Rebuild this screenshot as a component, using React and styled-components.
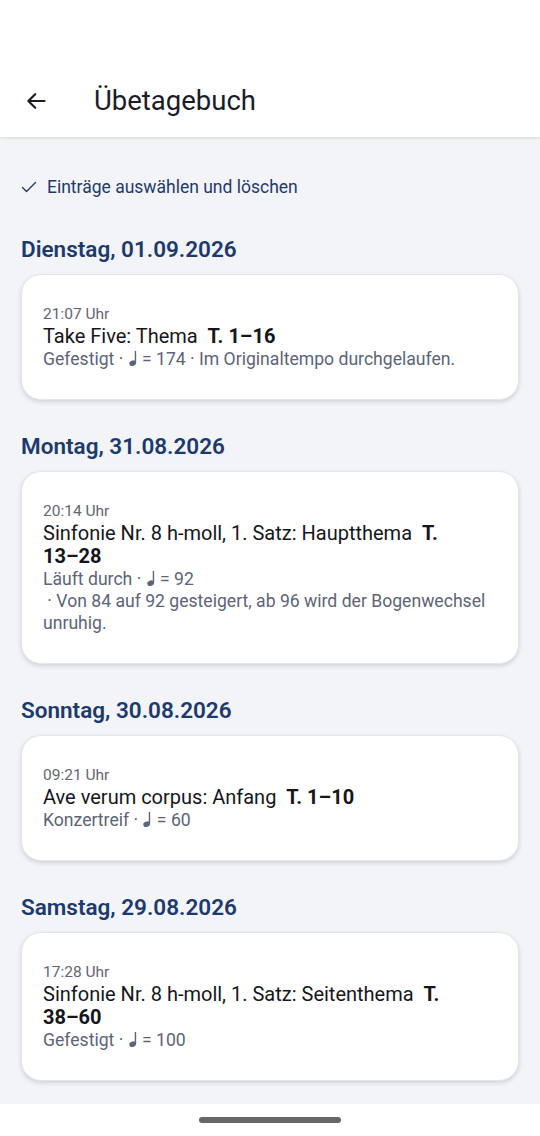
import React from "react";
import styled, { createGlobalStyle } from "styled-components";

const GlobalStyle = createGlobalStyle`
  html, body {
    margin: 0;
    padding: 0;
    background: #f3f4f8;
    font-family: Roboto, "Noto Sans", "Liberation Sans", sans-serif;
  }
  * { box-sizing: border-box; }
`;

const entries = [
  {
    day: "Dienstag, 01.09.2026",
    time: "21:07 Uhr",
    piece: "Take Five: Thema",
    bars: "1–16",
    status: "Gefestigt",
    tempo: 174,
    note: "Im Originaltempo durchgelaufen.",
    inline: true,
  },
  {
    day: "Montag, 31.08.2026",
    time: "20:14 Uhr",
    piece: "Sinfonie Nr. 8 h-moll, 1. Satz: Hauptthema",
    bars: "13–28",
    status: "Läuft durch",
    tempo: 92,
    note: "Von 84 auf 92 gesteigert, ab 96 wird der Bogenwechsel unruhig.",
  },
  {
    day: "Sonntag, 30.08.2026",
    time: "09:21 Uhr",
    piece: "Ave verum corpus: Anfang",
    bars: "1–10",
    status: "Konzertreif",
    tempo: 60,
  },
  {
    day: "Samstag, 29.08.2026",
    time: "17:28 Uhr",
    piece: "Sinfonie Nr. 8 h-moll, 1. Satz: Seitenthema",
    bars: "38–60",
    status: "Gefestigt",
    tempo: 100,
  },
];

function QuarterNote() {
  return (
    <NoteIcon viewBox="0 0 10 18" aria-label="♩">
      <path d="M7.6 1v12.6" stroke="currentColor" strokeWidth="1.5" />
      <ellipse cx="4.6" cy="14" rx="3.6" ry="2.8" transform="rotate(-22 4.6 14)" fill="currentColor" />
    </NoteIcon>
  );
}

export default function App() {
  return (
    <>
      <GlobalStyle />
      <Screen>
        <Header>
          <BackButton aria-label="Zurück">
            <svg width="24" height="24" viewBox="0 0 24 24" fill="none">
              <path
                d="M20.5 12H4.5M11.2 5.2L4.4 12l6.8 6.8"
                stroke="#1a1c28"
                strokeWidth="2.2"
                strokeLinecap="round"
                strokeLinejoin="round"
              />
            </svg>
          </BackButton>
          <Title>Übetagebuch</Title>
        </Header>
        <Content>
          <SelectRow>
            <svg width="16" height="16" viewBox="0 0 16 16" fill="none">
              <path
                d="M1.5 8.5l4 4L14.5 3.5"
                stroke="#1d3a6e"
                strokeWidth="1.4"
                strokeLinecap="round"
                strokeLinejoin="round"
              />
            </svg>
            Einträge auswählen und löschen
          </SelectRow>
          {entries.map((e) => (
            <Section key={e.day}>
              <DayHeading>{e.day}</DayHeading>
              <Card>
                <Time>{e.time}</Time>
                <Piece>
                  {e.piece}
                  {"  "}
                  <Bars>
                    T. <NoBreak>{e.bars}</NoBreak>
                  </Bars>
                </Piece>
                <Meta>
                  {e.status} · <QuarterNote /> = {e.tempo}
                  {e.note && e.inline && <> · {e.note}</>}
                </Meta>
                {e.note && !e.inline && <Meta>&nbsp;· {e.note}</Meta>}
              </Card>
            </Section>
          ))}
        </Content>
        <NavBar>
          <Pill />
        </NavBar>
      </Screen>
    </>
  );
}

const Screen = styled.div`
  display: flex;
  flex-direction: column;
  height: 1136px;
  overflow: hidden;
  background: #f3f4f8;
`;

const Header = styled.header`
  flex: none;
  display: flex;
  align-items: center;
  gap: 46px;
  height: 137px;
  padding: 64px 24px 0;
  background: #fff;
  box-shadow: 0 1px 3px rgba(0, 0, 0, 0.12);
  position: relative;
  z-index: 1;
`;

const BackButton = styled.button`
  display: flex;
  padding: 0;
  border: 0;
  background: none;
`;

const Title = styled.h1`
  margin: 0;
  font-size: 27.5px;
  font-weight: 400;
  color: #1a1c28;
`;

const Content = styled.main`
  flex: 1;
  overflow: hidden;
  padding: 40px 21px 0;
`;

const SelectRow = styled.div`
  display: flex;
  align-items: center;
  gap: 10px;
  height: 20px;
  font-size: 17.5px;
  color: #1d3a6e;
`;

const Section = styled.section`
  margin-top: 32px;
  &:first-of-type {
    margin-top: 38px;
  }
`;

const DayHeading = styled.h2`
  margin: 0 0 11px;
  font-size: 22.5px;
  line-height: 28px;
  font-weight: 600;
  color: #1d3a6e;
`;

const Card = styled.div`
  padding: 29px 21px;
  background: #fff;
  border: 1px solid #e4e6ec;
  border-radius: 20px;
  box-shadow: 0 2px 4px rgba(30, 40, 60, 0.16);
`;

const Time = styled.div`
  font-size: 15.5px;
  line-height: 21px;
  color: #5f6676;
`;

const Piece = styled.div`
  font-size: 20px;
  line-height: 23px;
  color: #15161c;
  white-space: pre-wrap;
`;

const Bars = styled.span`
  font-weight: 700;
`;

const NoBreak = styled.span`
  white-space: nowrap;
`;

const Meta = styled.div`
  font-size: 17.6px;
  line-height: 22px;
  color: #5b6478;
`;

const NoteIcon = styled.svg`
  display: inline-block;
  width: 10px;
  height: 17px;
  vertical-align: -2px;
  color: #5b6478;
`;

const NavBar = styled.div`
  flex: none;
  display: flex;
  justify-content: center;
  height: 32px;
  padding-top: 13px;
  background: #fff;
`;

const Pill = styled.div`
  width: 142px;
  height: 6px;
  border-radius: 3px;
  background: #666;
`;
